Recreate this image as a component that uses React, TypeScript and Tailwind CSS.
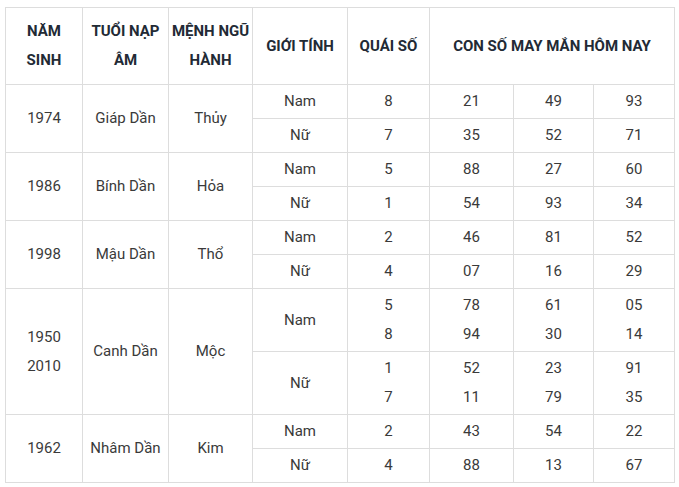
const rows = [
  {
    years: ["1974"],
    tuoi: "Giáp Dần",
    menh: "Thủy",
    sub: [
      { gt: "Nam", qs: ["8"], nums: [["21"], ["49"], ["93"]] },
      { gt: "Nữ", qs: ["7"], nums: [["35"], ["52"], ["71"]] },
    ],
  },
  {
    years: ["1986"],
    tuoi: "Bính Dần",
    menh: "Hỏa",
    sub: [
      { gt: "Nam", qs: ["5"], nums: [["88"], ["27"], ["60"]] },
      { gt: "Nữ", qs: ["1"], nums: [["54"], ["93"], ["34"]] },
    ],
  },
  {
    years: ["1998"],
    tuoi: "Mậu Dần",
    menh: "Thổ",
    sub: [
      { gt: "Nam", qs: ["2"], nums: [["46"], ["81"], ["52"]] },
      { gt: "Nữ", qs: ["4"], nums: [["07"], ["16"], ["29"]] },
    ],
  },
  {
    years: ["1950", "2010"],
    tuoi: "Canh Dần",
    menh: "Mộc",
    sub: [
      { gt: "Nam", qs: ["5", "8"], nums: [["78", "94"], ["61", "30"], ["05", "14"]] },
      { gt: "Nữ", qs: ["1", "7"], nums: [["52", "11"], ["23", "79"], ["91", "35"]] },
    ],
  },
  {
    years: ["1962"],
    tuoi: "Nhâm Dần",
    menh: "Kim",
    sub: [
      { gt: "Nam", qs: ["2"], nums: [["43"], ["54"], ["22"]] },
      { gt: "Nữ", qs: ["4"], nums: [["88"], ["13"], ["67"]] },
    ],
  },
];

function Lines({ items }: { items: string[] }) {
  return (
    <>
      {items.map((t, i) => (
        <div key={i} className="leading-[29px]">
          {t}
        </div>
      ))}
    </>
  );
}

export default function App() {
  const td = "border border-[#dddddd] text-center align-middle p-0";
  const th = "border border-[#dddddd] text-center align-middle p-0 font-bold text-[#222a35]";
  return (
    <div
      className="w-[679px] h-[487px] bg-white pl-[5px] pt-[7px] text-[15px] text-[#3a3a3a]"
      style={{ fontFamily: "Roboto, 'Noto Sans', sans-serif" }}
    >
      <table className="border-collapse table-fixed w-[669px]">
        <colgroup>
          <col className="w-[77px]" />
          <col className="w-[86px]" />
          <col className="w-[84px]" />
          <col className="w-[95px]" />
          <col className="w-[82px]" />
          <col className="w-[84px]" />
          <col className="w-[80px]" />
          <col className="w-[81px]" />
        </colgroup>
        <thead>
          <tr className="h-[77px]">
            <th className={th}>
              <Lines items={["NĂM", "SINH"]} />
            </th>
            <th className={th}>
              <Lines items={["TUỔI NẠP", "ÂM"]} />
            </th>
            <th className={th}>
              <Lines items={["MỆNH NGŨ", "HÀNH"]} />
            </th>
            <th className={th}>GIỚI TÍNH</th>
            <th className={th}>QUÁI SỐ</th>
            <th className={th} colSpan={3}>
              CON SỐ MAY MẮN HÔM NAY
            </th>
          </tr>
        </thead>
        <tbody>
          {rows.map((r) =>
            r.sub.map((s, si) => {
              const tall = s.qs.length > 1;
              return (
                <tr key={r.tuoi + s.gt} className={tall ? "h-[63px]" : "h-[34px]"}>
                  {si === 0 && (
                    <>
                      <td className={td} rowSpan={2}>
                        <Lines items={r.years} />
                      </td>
                      <td className={td} rowSpan={2}>
                        {r.tuoi}
                      </td>
                      <td className={td} rowSpan={2}>
                        {r.menh}
                      </td>
                    </>
                  )}
                  <td className={td}>{s.gt}</td>
                  <td className={td}>
                    <Lines items={s.qs} />
                  </td>
                  {s.nums.map((n, ni) => (
                    <td key={ni} className={td}>
                      <Lines items={n} />
                    </td>
                  ))}
                </tr>
              );
            })
          )}
        </tbody>
      </table>
    </div>
  );
}
